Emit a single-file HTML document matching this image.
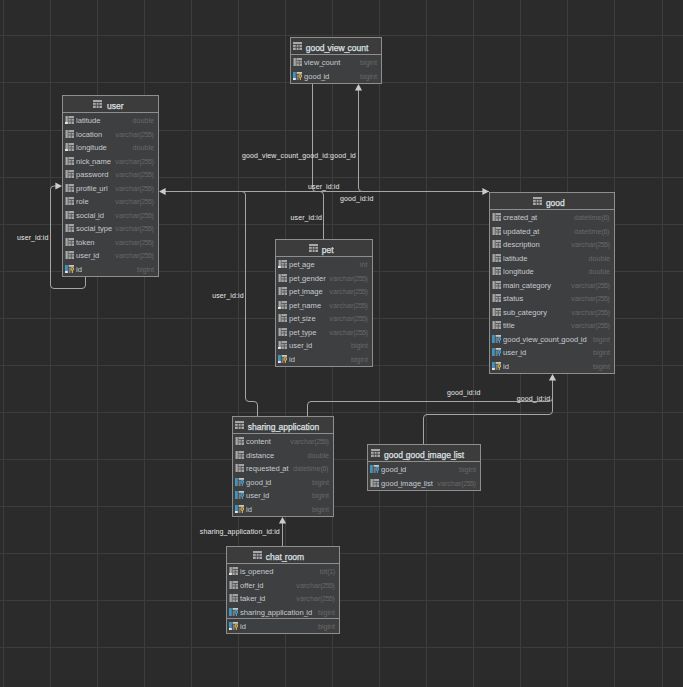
<!DOCTYPE html><html><head><meta charset="utf-8"><style>
html,body{margin:0;padding:0;width:683px;height:687px;overflow:hidden;background:#2b2b2b;}
body{position:relative;font-family:"Liberation Sans",sans-serif;}
.t{position:absolute;box-sizing:border-box;border:1px solid #8e8e8e;background:#3e3f40;}
.h{position:absolute;left:0;right:0;top:0;background:#3c3c3c;border-bottom:1px solid #8e8e8e;box-sizing:border-box;}
.s{position:absolute;white-space:nowrap;font-size:8px;line-height:10px;}
.nm{color:#c6cad0;transform:scaleX(0.95);transform-origin:0 0;}
.ty{color:#686868;transform:scaleX(0.9);transform-origin:100% 0;}
.hn{color:#dde0e4;font-size:8.5px;transform-origin:0 0;-webkit-text-stroke:0.25px #dde0e4;}
.hn i{letter-spacing:-2.2px;}
.s i{font-style:normal;letter-spacing:-1.8px;}
.s b{font-weight:normal;letter-spacing:-0.6px;}
.lb{position:absolute;white-space:nowrap;font-size:7px;line-height:8px;color:#e6e6e6;letter-spacing:0.12px;}
svg{position:absolute;left:0;top:0;}

</style></head><body>
<svg width="683" height="687" viewBox="0 0 683 687"><rect x="3" y="0" width="1" height="687" fill="#3d3d3d"/><rect x="50" y="0" width="1" height="687" fill="#3d3d3d"/><rect x="97" y="0" width="1" height="687" fill="#3d3d3d"/><rect x="144" y="0" width="1" height="687" fill="#3d3d3d"/><rect x="191" y="0" width="1" height="687" fill="#3d3d3d"/><rect x="238" y="0" width="1" height="687" fill="#3d3d3d"/><rect x="285" y="0" width="1" height="687" fill="#3d3d3d"/><rect x="332" y="0" width="1" height="687" fill="#3d3d3d"/><rect x="379" y="0" width="1" height="687" fill="#3d3d3d"/><rect x="426" y="0" width="1" height="687" fill="#3d3d3d"/><rect x="473" y="0" width="1" height="687" fill="#3d3d3d"/><rect x="520" y="0" width="1" height="687" fill="#3d3d3d"/><rect x="567" y="0" width="1" height="687" fill="#3d3d3d"/><rect x="614" y="0" width="1" height="687" fill="#3d3d3d"/><rect x="662" y="0" width="1" height="687" fill="#3d3d3d"/><rect x="0" y="35" width="683" height="1" fill="#3d3d3d"/><rect x="0" y="82" width="683" height="1" fill="#3d3d3d"/><rect x="0" y="130" width="683" height="1" fill="#3d3d3d"/><rect x="0" y="177" width="683" height="1" fill="#3d3d3d"/><rect x="0" y="224" width="683" height="1" fill="#3d3d3d"/><rect x="0" y="271" width="683" height="1" fill="#3d3d3d"/><rect x="0" y="318" width="683" height="1" fill="#3d3d3d"/><rect x="0" y="365" width="683" height="1" fill="#3d3d3d"/><rect x="0" y="412" width="683" height="1" fill="#3d3d3d"/><rect x="0" y="459" width="683" height="1" fill="#3d3d3d"/><rect x="0" y="506" width="683" height="1" fill="#3d3d3d"/><rect x="0" y="553" width="683" height="1" fill="#3d3d3d"/><rect x="0" y="600" width="683" height="1" fill="#3d3d3d"/><rect x="0" y="647" width="683" height="1" fill="#3d3d3d"/></svg>
<div class="t" style="left:62px;top:95px;width:97px;height:182px">
<div class="h" style="height:17px"></div>
</div>
<svg style="left:93.0px;top:100.00px" width="9" height="8"><rect x="0" y="0" width="9" height="8" fill="#a8a8a8"/><rect x="0" y="2" width="9" height="0.8" fill="#3c3c3c"/><rect x="0" y="4.8" width="9" height="0.8" fill="#3c3c3c"/><rect x="2.8" y="2" width="0.8" height="6" fill="#3c3c3c"/><rect x="5.6" y="2" width="0.8" height="6" fill="#3c3c3c"/></svg>
<div class="s hn" style="left:107.0px;top:100.60px">user</div>
<svg style="left:65px;top:116.25px" width="9" height="8"><rect x="0.5" y="0" width="2.3" height="8" fill="#a8a8a8"/><rect x="3.4" y="0" width="5.6" height="8" fill="#a4a4a4"/><rect x="3.4" y="2" width="5.6" height="0.8" fill="#505152"/><rect x="3.4" y="4.6" width="5.6" height="0.8" fill="#505152"/><rect x="5.8" y="2" width="0.8" height="6" fill="#505152"/><rect x="0" y="6" width="2.8" height="2" fill="#e4e4e4"/></svg>
<div class="s nm" style="left:75.5px;top:116.05px">latitude</div>
<div class="s ty" style="right:529.3px;top:116.05px">double</div>
<svg style="left:65px;top:129.75px" width="9" height="8"><rect x="0.5" y="0" width="2.3" height="8" fill="#a8a8a8"/><rect x="3.4" y="0" width="5.6" height="8" fill="#a4a4a4"/><rect x="3.4" y="2" width="5.6" height="0.8" fill="#505152"/><rect x="3.4" y="4.6" width="5.6" height="0.8" fill="#505152"/><rect x="5.8" y="2" width="0.8" height="6" fill="#505152"/></svg>
<div class="s nm" style="left:75.5px;top:129.55px">location</div>
<div class="s ty" style="right:529.3px;top:129.55px">varchar<b>(255</b>)</div>
<svg style="left:65px;top:143.25px" width="9" height="8"><rect x="0.5" y="0" width="2.3" height="8" fill="#a8a8a8"/><rect x="3.4" y="0" width="5.6" height="8" fill="#a4a4a4"/><rect x="3.4" y="2" width="5.6" height="0.8" fill="#505152"/><rect x="3.4" y="4.6" width="5.6" height="0.8" fill="#505152"/><rect x="5.8" y="2" width="0.8" height="6" fill="#505152"/><rect x="0" y="6" width="2.8" height="2" fill="#e4e4e4"/></svg>
<div class="s nm" style="left:75.5px;top:143.05px">longitude</div>
<div class="s ty" style="right:529.3px;top:143.05px">double</div>
<svg style="left:65px;top:156.75px" width="9" height="8"><rect x="0.5" y="0" width="2.3" height="8" fill="#a8a8a8"/><rect x="3.4" y="0" width="5.6" height="8" fill="#a4a4a4"/><rect x="3.4" y="2" width="5.6" height="0.8" fill="#505152"/><rect x="3.4" y="4.6" width="5.6" height="0.8" fill="#505152"/><rect x="5.8" y="2" width="0.8" height="6" fill="#505152"/></svg>
<div class="s nm" style="left:75.5px;top:156.55px">nick<i>_</i>name</div>
<div class="s ty" style="right:529.3px;top:156.55px">varchar<b>(255</b>)</div>
<svg style="left:65px;top:170.25px" width="9" height="8"><rect x="0.5" y="0" width="2.3" height="8" fill="#a8a8a8"/><rect x="3.4" y="0" width="5.6" height="8" fill="#a4a4a4"/><rect x="3.4" y="2" width="5.6" height="0.8" fill="#505152"/><rect x="3.4" y="4.6" width="5.6" height="0.8" fill="#505152"/><rect x="5.8" y="2" width="0.8" height="6" fill="#505152"/></svg>
<div class="s nm" style="left:75.5px;top:170.05px">password</div>
<div class="s ty" style="right:529.3px;top:170.05px">varchar<b>(255</b>)</div>
<svg style="left:65px;top:183.75px" width="9" height="8"><rect x="0.5" y="0" width="2.3" height="8" fill="#a8a8a8"/><rect x="3.4" y="0" width="5.6" height="8" fill="#a4a4a4"/><rect x="3.4" y="2" width="5.6" height="0.8" fill="#505152"/><rect x="3.4" y="4.6" width="5.6" height="0.8" fill="#505152"/><rect x="5.8" y="2" width="0.8" height="6" fill="#505152"/></svg>
<div class="s nm" style="left:75.5px;top:183.55px">profile<i>_</i>url</div>
<div class="s ty" style="right:529.3px;top:183.55px">varchar<b>(255</b>)</div>
<svg style="left:65px;top:197.25px" width="9" height="8"><rect x="0.5" y="0" width="2.3" height="8" fill="#a8a8a8"/><rect x="3.4" y="0" width="5.6" height="8" fill="#a4a4a4"/><rect x="3.4" y="2" width="5.6" height="0.8" fill="#505152"/><rect x="3.4" y="4.6" width="5.6" height="0.8" fill="#505152"/><rect x="5.8" y="2" width="0.8" height="6" fill="#505152"/></svg>
<div class="s nm" style="left:75.5px;top:197.05px">role</div>
<div class="s ty" style="right:529.3px;top:197.05px">varchar<b>(255</b>)</div>
<svg style="left:65px;top:210.75px" width="9" height="8"><rect x="0.5" y="0" width="2.3" height="8" fill="#a8a8a8"/><rect x="3.4" y="0" width="5.6" height="8" fill="#a4a4a4"/><rect x="3.4" y="2" width="5.6" height="0.8" fill="#505152"/><rect x="3.4" y="4.6" width="5.6" height="0.8" fill="#505152"/><rect x="5.8" y="2" width="0.8" height="6" fill="#505152"/></svg>
<div class="s nm" style="left:75.5px;top:210.55px">social<i>_</i>id</div>
<div class="s ty" style="right:529.3px;top:210.55px">varchar<b>(255</b>)</div>
<svg style="left:65px;top:224.25px" width="9" height="8"><rect x="0.5" y="0" width="2.3" height="8" fill="#a8a8a8"/><rect x="3.4" y="0" width="5.6" height="8" fill="#a4a4a4"/><rect x="3.4" y="2" width="5.6" height="0.8" fill="#505152"/><rect x="3.4" y="4.6" width="5.6" height="0.8" fill="#505152"/><rect x="5.8" y="2" width="0.8" height="6" fill="#505152"/></svg>
<div class="s nm" style="left:75.5px;top:224.05px">social<i>_</i>type</div>
<div class="s ty" style="right:529.3px;top:224.05px">varchar<b>(255</b>)</div>
<svg style="left:65px;top:237.75px" width="9" height="8"><rect x="0.5" y="0" width="2.3" height="8" fill="#a8a8a8"/><rect x="3.4" y="0" width="5.6" height="8" fill="#a4a4a4"/><rect x="3.4" y="2" width="5.6" height="0.8" fill="#505152"/><rect x="3.4" y="4.6" width="5.6" height="0.8" fill="#505152"/><rect x="5.8" y="2" width="0.8" height="6" fill="#505152"/></svg>
<div class="s nm" style="left:75.5px;top:237.55px">token</div>
<div class="s ty" style="right:529.3px;top:237.55px">varchar<b>(255</b>)</div>
<svg style="left:65px;top:251.25px" width="9" height="8"><rect x="0.5" y="0" width="2.3" height="8" fill="#a8a8a8"/><rect x="3.4" y="0" width="5.6" height="8" fill="#a4a4a4"/><rect x="3.4" y="2" width="5.6" height="0.8" fill="#505152"/><rect x="3.4" y="4.6" width="5.6" height="0.8" fill="#505152"/><rect x="5.8" y="2" width="0.8" height="6" fill="#505152"/></svg>
<div class="s nm" style="left:75.5px;top:251.05px">user<i>_</i>id</div>
<div class="s ty" style="right:529.3px;top:251.05px">varchar<b>(255</b>)</div>
<svg style="left:65px;top:264.75px" width="9" height="8"><rect x="0" y="0" width="2.8" height="8" fill="#3f95bd"/><rect x="3.6" y="0" width="5.4" height="1.8" fill="#c8c8c8"/><rect x="3.6" y="2.4" width="2" height="5.6" fill="#7c7c7c"/><circle cx="7.3" cy="3.9" r="1.3" fill="none" stroke="#dcb24a" stroke-width="1.1"/><rect x="6.8" y="5" width="1.1" height="3" fill="#dcb24a"/><rect x="0" y="6" width="2.8" height="2" fill="#e4e4e4"/></svg>
<div class="s nm" style="left:75.5px;top:264.55px">id</div>
<div class="s ty" style="right:529.3px;top:264.55px">bigint</div>
<div class="t" style="left:290px;top:37px;width:92px;height:47px">
<div class="h" style="height:17px"></div>
</div>
<svg style="left:293.2px;top:42.00px" width="9" height="8"><rect x="0" y="0" width="9" height="8" fill="#a8a8a8"/><rect x="0" y="2" width="9" height="0.8" fill="#3c3c3c"/><rect x="0" y="4.8" width="9" height="0.8" fill="#3c3c3c"/><rect x="2.8" y="2" width="0.8" height="6" fill="#3c3c3c"/><rect x="5.6" y="2" width="0.8" height="6" fill="#3c3c3c"/></svg>
<div class="s hn" style="left:305.7px;top:42.60px">good<i>_</i>view<i>_</i>count</div>
<svg style="left:293px;top:58.25px" width="9" height="8"><rect x="0.5" y="0" width="2.3" height="8" fill="#a8a8a8"/><rect x="3.4" y="0" width="5.6" height="8" fill="#a4a4a4"/><rect x="3.4" y="2" width="5.6" height="0.8" fill="#505152"/><rect x="3.4" y="4.6" width="5.6" height="0.8" fill="#505152"/><rect x="5.8" y="2" width="0.8" height="6" fill="#505152"/></svg>
<div class="s nm" style="left:303.5px;top:58.05px">view<i>_</i>count</div>
<div class="s ty" style="right:306.3px;top:58.05px">bigint</div>
<svg style="left:293px;top:71.75px" width="9" height="8"><rect x="0" y="0" width="2.8" height="8" fill="#3f95bd"/><rect x="3.6" y="0" width="5.4" height="1.8" fill="#c8c8c8"/><rect x="3.6" y="2.4" width="2" height="5.6" fill="#7c7c7c"/><circle cx="7.3" cy="3.9" r="1.3" fill="none" stroke="#dcb24a" stroke-width="1.1"/><rect x="6.8" y="5" width="1.1" height="3" fill="#dcb24a"/><rect x="0" y="6" width="2.8" height="2" fill="#e4e4e4"/></svg>
<div class="s nm" style="left:303.5px;top:71.55px">good<i>_</i>id</div>
<div class="s ty" style="right:306.3px;top:71.55px">bigint</div>
<div class="t" style="left:489px;top:192px;width:126px;height:182px">
<div class="h" style="height:17px"></div>
</div>
<svg style="left:533.2px;top:197.00px" width="9" height="8"><rect x="0" y="0" width="9" height="8" fill="#a8a8a8"/><rect x="0" y="2" width="9" height="0.8" fill="#3c3c3c"/><rect x="0" y="4.8" width="9" height="0.8" fill="#3c3c3c"/><rect x="2.8" y="2" width="0.8" height="6" fill="#3c3c3c"/><rect x="5.6" y="2" width="0.8" height="6" fill="#3c3c3c"/></svg>
<div class="s hn" style="left:545.9px;top:197.60px">good</div>
<svg style="left:492px;top:213.25px" width="9" height="8"><rect x="0.5" y="0" width="2.3" height="8" fill="#a8a8a8"/><rect x="3.4" y="0" width="5.6" height="8" fill="#a4a4a4"/><rect x="3.4" y="2" width="5.6" height="0.8" fill="#505152"/><rect x="3.4" y="4.6" width="5.6" height="0.8" fill="#505152"/><rect x="5.8" y="2" width="0.8" height="6" fill="#505152"/></svg>
<div class="s nm" style="left:502.5px;top:213.05px">created<i>_</i>at</div>
<div class="s ty" style="right:73.29999999999995px;top:213.05px">datetime<b>(6</b>)</div>
<svg style="left:492px;top:226.75px" width="9" height="8"><rect x="0.5" y="0" width="2.3" height="8" fill="#a8a8a8"/><rect x="3.4" y="0" width="5.6" height="8" fill="#a4a4a4"/><rect x="3.4" y="2" width="5.6" height="0.8" fill="#505152"/><rect x="3.4" y="4.6" width="5.6" height="0.8" fill="#505152"/><rect x="5.8" y="2" width="0.8" height="6" fill="#505152"/></svg>
<div class="s nm" style="left:502.5px;top:226.55px">updated<i>_</i>at</div>
<div class="s ty" style="right:73.29999999999995px;top:226.55px">datetime<b>(6</b>)</div>
<svg style="left:492px;top:240.25px" width="9" height="8"><rect x="0.5" y="0" width="2.3" height="8" fill="#a8a8a8"/><rect x="3.4" y="0" width="5.6" height="8" fill="#a4a4a4"/><rect x="3.4" y="2" width="5.6" height="0.8" fill="#505152"/><rect x="3.4" y="4.6" width="5.6" height="0.8" fill="#505152"/><rect x="5.8" y="2" width="0.8" height="6" fill="#505152"/></svg>
<div class="s nm" style="left:502.5px;top:240.05px">description</div>
<div class="s ty" style="right:73.29999999999995px;top:240.05px">varchar<b>(255</b>)</div>
<svg style="left:492px;top:253.75px" width="9" height="8"><rect x="0.5" y="0" width="2.3" height="8" fill="#a8a8a8"/><rect x="3.4" y="0" width="5.6" height="8" fill="#a4a4a4"/><rect x="3.4" y="2" width="5.6" height="0.8" fill="#505152"/><rect x="3.4" y="4.6" width="5.6" height="0.8" fill="#505152"/><rect x="5.8" y="2" width="0.8" height="6" fill="#505152"/></svg>
<div class="s nm" style="left:502.5px;top:253.55px">latitude</div>
<div class="s ty" style="right:73.29999999999995px;top:253.55px">double</div>
<svg style="left:492px;top:267.25px" width="9" height="8"><rect x="0.5" y="0" width="2.3" height="8" fill="#a8a8a8"/><rect x="3.4" y="0" width="5.6" height="8" fill="#a4a4a4"/><rect x="3.4" y="2" width="5.6" height="0.8" fill="#505152"/><rect x="3.4" y="4.6" width="5.6" height="0.8" fill="#505152"/><rect x="5.8" y="2" width="0.8" height="6" fill="#505152"/></svg>
<div class="s nm" style="left:502.5px;top:267.05px">longitude</div>
<div class="s ty" style="right:73.29999999999995px;top:267.05px">double</div>
<svg style="left:492px;top:280.75px" width="9" height="8"><rect x="0.5" y="0" width="2.3" height="8" fill="#a8a8a8"/><rect x="3.4" y="0" width="5.6" height="8" fill="#a4a4a4"/><rect x="3.4" y="2" width="5.6" height="0.8" fill="#505152"/><rect x="3.4" y="4.6" width="5.6" height="0.8" fill="#505152"/><rect x="5.8" y="2" width="0.8" height="6" fill="#505152"/></svg>
<div class="s nm" style="left:502.5px;top:280.55px">main<i>_</i>category</div>
<div class="s ty" style="right:73.29999999999995px;top:280.55px">varchar<b>(255</b>)</div>
<svg style="left:492px;top:294.25px" width="9" height="8"><rect x="0.5" y="0" width="2.3" height="8" fill="#a8a8a8"/><rect x="3.4" y="0" width="5.6" height="8" fill="#a4a4a4"/><rect x="3.4" y="2" width="5.6" height="0.8" fill="#505152"/><rect x="3.4" y="4.6" width="5.6" height="0.8" fill="#505152"/><rect x="5.8" y="2" width="0.8" height="6" fill="#505152"/></svg>
<div class="s nm" style="left:502.5px;top:294.05px">status</div>
<div class="s ty" style="right:73.29999999999995px;top:294.05px">varchar<b>(255</b>)</div>
<svg style="left:492px;top:307.75px" width="9" height="8"><rect x="0.5" y="0" width="2.3" height="8" fill="#a8a8a8"/><rect x="3.4" y="0" width="5.6" height="8" fill="#a4a4a4"/><rect x="3.4" y="2" width="5.6" height="0.8" fill="#505152"/><rect x="3.4" y="4.6" width="5.6" height="0.8" fill="#505152"/><rect x="5.8" y="2" width="0.8" height="6" fill="#505152"/></svg>
<div class="s nm" style="left:502.5px;top:307.55px">sub<i>_</i>category</div>
<div class="s ty" style="right:73.29999999999995px;top:307.55px">varchar<b>(255</b>)</div>
<svg style="left:492px;top:321.25px" width="9" height="8"><rect x="0.5" y="0" width="2.3" height="8" fill="#a8a8a8"/><rect x="3.4" y="0" width="5.6" height="8" fill="#a4a4a4"/><rect x="3.4" y="2" width="5.6" height="0.8" fill="#505152"/><rect x="3.4" y="4.6" width="5.6" height="0.8" fill="#505152"/><rect x="5.8" y="2" width="0.8" height="6" fill="#505152"/></svg>
<div class="s nm" style="left:502.5px;top:321.05px">title</div>
<div class="s ty" style="right:73.29999999999995px;top:321.05px">varchar<b>(255</b>)</div>
<svg style="left:492px;top:334.75px" width="9" height="8"><rect x="0" y="0" width="2.8" height="8" fill="#3f95bd"/><rect x="3.6" y="0" width="5.4" height="1.8" fill="#c8c8c8"/><rect x="3.6" y="2.4" width="2" height="5.6" fill="#7c7c7c"/><circle cx="7.3" cy="3.9" r="1.3" fill="none" stroke="#45a6d8" stroke-width="1.1"/><rect x="6.8" y="5" width="1.1" height="3" fill="#45a6d8"/></svg>
<div class="s nm" style="left:502.5px;top:334.55px">good<i>_</i>view<i>_</i>count<i>_</i>good<i>_</i>id</div>
<div class="s ty" style="right:73.29999999999995px;top:334.55px">bigint</div>
<svg style="left:492px;top:348.25px" width="9" height="8"><rect x="0" y="0" width="2.8" height="8" fill="#3f95bd"/><rect x="3.6" y="0" width="5.4" height="1.8" fill="#c8c8c8"/><rect x="3.6" y="2.4" width="2" height="5.6" fill="#7c7c7c"/><circle cx="7.3" cy="3.9" r="1.3" fill="none" stroke="#45a6d8" stroke-width="1.1"/><rect x="6.8" y="5" width="1.1" height="3" fill="#45a6d8"/></svg>
<div class="s nm" style="left:502.5px;top:348.05px">user<i>_</i>id</div>
<div class="s ty" style="right:73.29999999999995px;top:348.05px">bigint</div>
<svg style="left:492px;top:361.75px" width="9" height="8"><rect x="0" y="0" width="2.8" height="8" fill="#3f95bd"/><rect x="3.6" y="0" width="5.4" height="1.8" fill="#c8c8c8"/><rect x="3.6" y="2.4" width="2" height="5.6" fill="#7c7c7c"/><circle cx="7.3" cy="3.9" r="1.3" fill="none" stroke="#dcb24a" stroke-width="1.1"/><rect x="6.8" y="5" width="1.1" height="3" fill="#dcb24a"/><rect x="0" y="6" width="2.8" height="2" fill="#e4e4e4"/></svg>
<div class="s nm" style="left:502.5px;top:361.55px">id</div>
<div class="s ty" style="right:73.29999999999995px;top:361.55px">bigint</div>
<div class="t" style="left:275px;top:239px;width:98px;height:128px">
<div class="h" style="height:17px"></div>
</div>
<svg style="left:309.2px;top:244.00px" width="9" height="8"><rect x="0" y="0" width="9" height="8" fill="#a8a8a8"/><rect x="0" y="2" width="9" height="0.8" fill="#3c3c3c"/><rect x="0" y="4.8" width="9" height="0.8" fill="#3c3c3c"/><rect x="2.8" y="2" width="0.8" height="6" fill="#3c3c3c"/><rect x="5.6" y="2" width="0.8" height="6" fill="#3c3c3c"/></svg>
<div class="s hn" style="left:321.7px;top:244.60px">pet</div>
<svg style="left:278px;top:260.25px" width="9" height="8"><rect x="0.5" y="0" width="2.3" height="8" fill="#a8a8a8"/><rect x="3.4" y="0" width="5.6" height="8" fill="#a4a4a4"/><rect x="3.4" y="2" width="5.6" height="0.8" fill="#505152"/><rect x="3.4" y="4.6" width="5.6" height="0.8" fill="#505152"/><rect x="5.8" y="2" width="0.8" height="6" fill="#505152"/><rect x="0" y="6" width="2.8" height="2" fill="#e4e4e4"/></svg>
<div class="s nm" style="left:288.5px;top:260.05px">pet<i>_</i>age</div>
<div class="s ty" style="right:315.3px;top:260.05px">int</div>
<svg style="left:278px;top:273.75px" width="9" height="8"><rect x="0.5" y="0" width="2.3" height="8" fill="#a8a8a8"/><rect x="3.4" y="0" width="5.6" height="8" fill="#a4a4a4"/><rect x="3.4" y="2" width="5.6" height="0.8" fill="#505152"/><rect x="3.4" y="4.6" width="5.6" height="0.8" fill="#505152"/><rect x="5.8" y="2" width="0.8" height="6" fill="#505152"/></svg>
<div class="s nm" style="left:288.5px;top:273.55px">pet<i>_</i>gender</div>
<div class="s ty" style="right:315.3px;top:273.55px">varchar<b>(255</b>)</div>
<svg style="left:278px;top:287.25px" width="9" height="8"><rect x="0.5" y="0" width="2.3" height="8" fill="#a8a8a8"/><rect x="3.4" y="0" width="5.6" height="8" fill="#a4a4a4"/><rect x="3.4" y="2" width="5.6" height="0.8" fill="#505152"/><rect x="3.4" y="4.6" width="5.6" height="0.8" fill="#505152"/><rect x="5.8" y="2" width="0.8" height="6" fill="#505152"/></svg>
<div class="s nm" style="left:288.5px;top:287.05px">pet<i>_</i>image</div>
<div class="s ty" style="right:315.3px;top:287.05px">varchar<b>(255</b>)</div>
<svg style="left:278px;top:300.75px" width="9" height="8"><rect x="0.5" y="0" width="2.3" height="8" fill="#a8a8a8"/><rect x="3.4" y="0" width="5.6" height="8" fill="#a4a4a4"/><rect x="3.4" y="2" width="5.6" height="0.8" fill="#505152"/><rect x="3.4" y="4.6" width="5.6" height="0.8" fill="#505152"/><rect x="5.8" y="2" width="0.8" height="6" fill="#505152"/><rect x="0" y="6" width="2.8" height="2" fill="#e4e4e4"/></svg>
<div class="s nm" style="left:288.5px;top:300.55px">pet<i>_</i>name</div>
<div class="s ty" style="right:315.3px;top:300.55px">varchar<b>(255</b>)</div>
<svg style="left:278px;top:314.25px" width="9" height="8"><rect x="0.5" y="0" width="2.3" height="8" fill="#a8a8a8"/><rect x="3.4" y="0" width="5.6" height="8" fill="#a4a4a4"/><rect x="3.4" y="2" width="5.6" height="0.8" fill="#505152"/><rect x="3.4" y="4.6" width="5.6" height="0.8" fill="#505152"/><rect x="5.8" y="2" width="0.8" height="6" fill="#505152"/></svg>
<div class="s nm" style="left:288.5px;top:314.05px">pet<i>_</i>size</div>
<div class="s ty" style="right:315.3px;top:314.05px">varchar<b>(255</b>)</div>
<svg style="left:278px;top:327.75px" width="9" height="8"><rect x="0.5" y="0" width="2.3" height="8" fill="#a8a8a8"/><rect x="3.4" y="0" width="5.6" height="8" fill="#a4a4a4"/><rect x="3.4" y="2" width="5.6" height="0.8" fill="#505152"/><rect x="3.4" y="4.6" width="5.6" height="0.8" fill="#505152"/><rect x="5.8" y="2" width="0.8" height="6" fill="#505152"/></svg>
<div class="s nm" style="left:288.5px;top:327.55px">pet<i>_</i>type</div>
<div class="s ty" style="right:315.3px;top:327.55px">varchar<b>(255</b>)</div>
<svg style="left:278px;top:341.25px" width="9" height="8"><rect x="0.5" y="0" width="2.3" height="8" fill="#a8a8a8"/><rect x="3.4" y="0" width="5.6" height="8" fill="#a4a4a4"/><rect x="3.4" y="2" width="5.6" height="0.8" fill="#505152"/><rect x="3.4" y="4.6" width="5.6" height="0.8" fill="#505152"/><rect x="5.8" y="2" width="0.8" height="6" fill="#505152"/><rect x="0" y="6" width="2.8" height="2" fill="#e4e4e4"/></svg>
<div class="s nm" style="left:288.5px;top:341.05px">user<i>_</i>id</div>
<div class="s ty" style="right:315.3px;top:341.05px">bigint</div>
<svg style="left:278px;top:354.75px" width="9" height="8"><rect x="0" y="0" width="2.8" height="8" fill="#3f95bd"/><rect x="3.6" y="0" width="5.4" height="1.8" fill="#c8c8c8"/><rect x="3.6" y="2.4" width="2" height="5.6" fill="#7c7c7c"/><circle cx="7.3" cy="3.9" r="1.3" fill="none" stroke="#dcb24a" stroke-width="1.1"/><rect x="6.8" y="5" width="1.1" height="3" fill="#dcb24a"/><rect x="0" y="6" width="2.8" height="2" fill="#e4e4e4"/></svg>
<div class="s nm" style="left:288.5px;top:354.55px">id</div>
<div class="s ty" style="right:315.3px;top:354.55px">bigint</div>
<div class="t" style="left:232px;top:416px;width:102px;height:101px">
<div class="h" style="height:17px"></div>
</div>
<svg style="left:235.1px;top:421.00px" width="9" height="8"><rect x="0" y="0" width="9" height="8" fill="#a8a8a8"/><rect x="0" y="2" width="9" height="0.8" fill="#3c3c3c"/><rect x="0" y="4.8" width="9" height="0.8" fill="#3c3c3c"/><rect x="2.8" y="2" width="0.8" height="6" fill="#3c3c3c"/><rect x="5.6" y="2" width="0.8" height="6" fill="#3c3c3c"/></svg>
<div class="s hn" style="left:247.7px;top:421.60px">sharing<i>_</i>application</div>
<svg style="left:235px;top:437.25px" width="9" height="8"><rect x="0.5" y="0" width="2.3" height="8" fill="#a8a8a8"/><rect x="3.4" y="0" width="5.6" height="8" fill="#a4a4a4"/><rect x="3.4" y="2" width="5.6" height="0.8" fill="#505152"/><rect x="3.4" y="4.6" width="5.6" height="0.8" fill="#505152"/><rect x="5.8" y="2" width="0.8" height="6" fill="#505152"/></svg>
<div class="s nm" style="left:245.5px;top:437.05px">content</div>
<div class="s ty" style="right:354.3px;top:437.05px">varchar<b>(255</b>)</div>
<svg style="left:235px;top:450.75px" width="9" height="8"><rect x="0.5" y="0" width="2.3" height="8" fill="#a8a8a8"/><rect x="3.4" y="0" width="5.6" height="8" fill="#a4a4a4"/><rect x="3.4" y="2" width="5.6" height="0.8" fill="#505152"/><rect x="3.4" y="4.6" width="5.6" height="0.8" fill="#505152"/><rect x="5.8" y="2" width="0.8" height="6" fill="#505152"/></svg>
<div class="s nm" style="left:245.5px;top:450.55px">distance</div>
<div class="s ty" style="right:354.3px;top:450.55px">double</div>
<svg style="left:235px;top:464.25px" width="9" height="8"><rect x="0.5" y="0" width="2.3" height="8" fill="#a8a8a8"/><rect x="3.4" y="0" width="5.6" height="8" fill="#a4a4a4"/><rect x="3.4" y="2" width="5.6" height="0.8" fill="#505152"/><rect x="3.4" y="4.6" width="5.6" height="0.8" fill="#505152"/><rect x="5.8" y="2" width="0.8" height="6" fill="#505152"/></svg>
<div class="s nm" style="left:245.5px;top:464.05px">requested<i>_</i>at</div>
<div class="s ty" style="right:354.3px;top:464.05px">datetime<b>(6</b>)</div>
<svg style="left:235px;top:477.75px" width="9" height="8"><rect x="0" y="0" width="2.8" height="8" fill="#3f95bd"/><rect x="3.6" y="0" width="5.4" height="1.8" fill="#c8c8c8"/><rect x="3.6" y="2.4" width="2" height="5.6" fill="#7c7c7c"/><circle cx="7.3" cy="3.9" r="1.3" fill="none" stroke="#45a6d8" stroke-width="1.1"/><rect x="6.8" y="5" width="1.1" height="3" fill="#45a6d8"/></svg>
<div class="s nm" style="left:245.5px;top:477.55px">good<i>_</i>id</div>
<div class="s ty" style="right:354.3px;top:477.55px">bigint</div>
<svg style="left:235px;top:491.25px" width="9" height="8"><rect x="0" y="0" width="2.8" height="8" fill="#3f95bd"/><rect x="3.6" y="0" width="5.4" height="1.8" fill="#c8c8c8"/><rect x="3.6" y="2.4" width="2" height="5.6" fill="#7c7c7c"/><circle cx="7.3" cy="3.9" r="1.3" fill="none" stroke="#45a6d8" stroke-width="1.1"/><rect x="6.8" y="5" width="1.1" height="3" fill="#45a6d8"/></svg>
<div class="s nm" style="left:245.5px;top:491.05px">user<i>_</i>id</div>
<div class="s ty" style="right:354.3px;top:491.05px">bigint</div>
<svg style="left:235px;top:504.75px" width="9" height="8"><rect x="0" y="0" width="2.8" height="8" fill="#3f95bd"/><rect x="3.6" y="0" width="5.4" height="1.8" fill="#c8c8c8"/><rect x="3.6" y="2.4" width="2" height="5.6" fill="#7c7c7c"/><circle cx="7.3" cy="3.9" r="1.3" fill="none" stroke="#dcb24a" stroke-width="1.1"/><rect x="6.8" y="5" width="1.1" height="3" fill="#dcb24a"/><rect x="0" y="6" width="2.8" height="2" fill="#e4e4e4"/></svg>
<div class="s nm" style="left:245.5px;top:504.55px">id</div>
<div class="s ty" style="right:354.3px;top:504.55px">bigint</div>
<div class="t" style="left:367px;top:444px;width:114px;height:47px">
<div class="h" style="height:17px"></div>
</div>
<svg style="left:370.8px;top:449.00px" width="9" height="8"><rect x="0" y="0" width="9" height="8" fill="#a8a8a8"/><rect x="0" y="2" width="9" height="0.8" fill="#3c3c3c"/><rect x="0" y="4.8" width="9" height="0.8" fill="#3c3c3c"/><rect x="2.8" y="2" width="0.8" height="6" fill="#3c3c3c"/><rect x="5.6" y="2" width="0.8" height="6" fill="#3c3c3c"/></svg>
<div class="s hn" style="left:384.0px;top:449.60px">good<i>_</i>good<i>_</i>image<i>_</i>list</div>
<svg style="left:370px;top:465.25px" width="9" height="8"><rect x="0" y="0" width="2.8" height="8" fill="#3f95bd"/><rect x="3.6" y="0" width="5.4" height="1.8" fill="#c8c8c8"/><rect x="3.6" y="2.4" width="2" height="5.6" fill="#7c7c7c"/><circle cx="7.3" cy="3.9" r="1.3" fill="none" stroke="#45a6d8" stroke-width="1.1"/><rect x="6.8" y="5" width="1.1" height="3" fill="#45a6d8"/></svg>
<div class="s nm" style="left:380.5px;top:465.05px">good<i>_</i>id</div>
<div class="s ty" style="right:207.3px;top:465.05px">bigint</div>
<svg style="left:370px;top:478.75px" width="9" height="8"><rect x="0.5" y="0" width="2.3" height="8" fill="#a8a8a8"/><rect x="3.4" y="0" width="5.6" height="8" fill="#a4a4a4"/><rect x="3.4" y="2" width="5.6" height="0.8" fill="#505152"/><rect x="3.4" y="4.6" width="5.6" height="0.8" fill="#505152"/><rect x="5.8" y="2" width="0.8" height="6" fill="#505152"/></svg>
<div class="s nm" style="left:380.5px;top:478.55px">good<i>_</i>image<i>_</i>list</div>
<div class="s ty" style="right:207.3px;top:478.55px">varchar<b>(255</b>)</div>
<div class="t" style="left:226px;top:546px;width:114px;height:88px">
<div class="h" style="height:17px"></div>
</div>
<svg style="left:253.2px;top:551.00px" width="9" height="8"><rect x="0" y="0" width="9" height="8" fill="#a8a8a8"/><rect x="0" y="2" width="9" height="0.8" fill="#3c3c3c"/><rect x="0" y="4.8" width="9" height="0.8" fill="#3c3c3c"/><rect x="2.8" y="2" width="0.8" height="6" fill="#3c3c3c"/><rect x="5.6" y="2" width="0.8" height="6" fill="#3c3c3c"/></svg>
<div class="s hn" style="left:265.8px;top:551.60px">chat<i>_</i>room</div>
<svg style="left:229px;top:567.25px" width="9" height="8"><rect x="0.5" y="0" width="2.3" height="8" fill="#a8a8a8"/><rect x="3.4" y="0" width="5.6" height="8" fill="#a4a4a4"/><rect x="3.4" y="2" width="5.6" height="0.8" fill="#505152"/><rect x="3.4" y="4.6" width="5.6" height="0.8" fill="#505152"/><rect x="5.8" y="2" width="0.8" height="6" fill="#505152"/><rect x="0" y="6" width="2.8" height="2" fill="#e4e4e4"/></svg>
<div class="s nm" style="left:239.5px;top:567.05px">is<i>_</i>opened</div>
<div class="s ty" style="right:348.3px;top:567.05px">bit<b>(1</b>)</div>
<svg style="left:229px;top:580.75px" width="9" height="8"><rect x="0.5" y="0" width="2.3" height="8" fill="#a8a8a8"/><rect x="3.4" y="0" width="5.6" height="8" fill="#a4a4a4"/><rect x="3.4" y="2" width="5.6" height="0.8" fill="#505152"/><rect x="3.4" y="4.6" width="5.6" height="0.8" fill="#505152"/><rect x="5.8" y="2" width="0.8" height="6" fill="#505152"/></svg>
<div class="s nm" style="left:239.5px;top:580.55px">offer<i>_</i>id</div>
<div class="s ty" style="right:348.3px;top:580.55px">varchar<b>(255</b>)</div>
<svg style="left:229px;top:594.25px" width="9" height="8"><rect x="0.5" y="0" width="2.3" height="8" fill="#a8a8a8"/><rect x="3.4" y="0" width="5.6" height="8" fill="#a4a4a4"/><rect x="3.4" y="2" width="5.6" height="0.8" fill="#505152"/><rect x="3.4" y="4.6" width="5.6" height="0.8" fill="#505152"/><rect x="5.8" y="2" width="0.8" height="6" fill="#505152"/></svg>
<div class="s nm" style="left:239.5px;top:594.05px">taker<i>_</i>id</div>
<div class="s ty" style="right:348.3px;top:594.05px">varchar<b>(255</b>)</div>
<svg style="left:229px;top:607.75px" width="9" height="8"><rect x="0" y="0" width="2.8" height="8" fill="#3f95bd"/><rect x="3.6" y="0" width="5.4" height="1.8" fill="#c8c8c8"/><rect x="3.6" y="2.4" width="2" height="5.6" fill="#7c7c7c"/><circle cx="7.3" cy="3.9" r="1.3" fill="none" stroke="#45a6d8" stroke-width="1.1"/><rect x="6.8" y="5" width="1.1" height="3" fill="#45a6d8"/></svg>
<div class="s nm" style="left:239.5px;top:607.55px">sharing<i>_</i>application<i>_</i>id</div>
<div class="s ty" style="right:348.3px;top:607.55px">bigint</div>
<svg style="left:229px;top:622.25px" width="9" height="8"><rect x="0" y="0" width="2.8" height="8" fill="#3f95bd"/><rect x="3.6" y="0" width="5.4" height="1.8" fill="#c8c8c8"/><rect x="3.6" y="2.4" width="2" height="5.6" fill="#7c7c7c"/><circle cx="7.3" cy="3.9" r="1.3" fill="none" stroke="#dcb24a" stroke-width="1.1"/><rect x="6.8" y="5" width="1.1" height="3" fill="#dcb24a"/><rect x="0" y="6" width="2.8" height="2" fill="#e4e4e4"/></svg>
<div class="s nm" style="left:239.5px;top:622.05px">id</div>
<div class="s ty" style="right:348.3px;top:622.05px">bigint</div>
<div style="position:absolute;left:226px;width:114px;top:618.0px;height:1px;background:#8e8e8e"></div>
<svg width="683" height="687" viewBox="0 0 683 687"><path d="M489 191.5 H160" fill="none" stroke="#a6a6a6" stroke-width="1"/><polygon points="159,191.5 165.6,187.9 165.6,195.1" fill="#cccccc"/><polygon points="489,191.5 482.4,187.9 482.4,195.1" fill="#cccccc"/><path d="M323.5 239 V195.0 Q323.5 191.5 320.0 191.5" fill="none" stroke="#a6a6a6" stroke-width="1"/><path d="M257.5 416 V405.0 Q257.5 401.5 254.0 401.5 H249.0 Q245.5 401.5 245.5 398.0 V195.0 Q245.5 191.5 242.0 191.5" fill="none" stroke="#a6a6a6" stroke-width="1"/><path d="M312.5 84 V188.0 Q312.5 191.5 316.0 191.5" fill="none" stroke="#a6a6a6" stroke-width="1"/><path d="M362.0 191.5 Q358.5 191.5 358.5 188.0 V90" fill="none" stroke="#a6a6a6" stroke-width="1"/><polygon points="358.5,84 354.9,90.6 362.1,90.6" fill="#cccccc"/><path d="M85.5 277 V285.0 Q85.5 288.5 82.0 288.5 H54.0 Q50.5 288.5 50.5 285.0 V189.5 Q50.5 186 54.0 186 H56" fill="none" stroke="#a6a6a6" stroke-width="1"/><polygon points="62,186 55.4,182.4 55.4,189.6" fill="#cccccc"/><path d="M307.5 416 V405.0 Q307.5 401.5 311.0 401.5 H549.0 Q552.5 401.5 552.5 398.0 V380" fill="none" stroke="#a6a6a6" stroke-width="1"/><path d="M423.5 444 V418.0 Q423.5 414.5 427.0 414.5 H549.0 Q552.5 414.5 552.5 411.0 V380" fill="none" stroke="#a6a6a6" stroke-width="1"/><polygon points="552.5,374 548.9,380.6 556.1,380.6" fill="#cccccc"/><path d="M282.5 546 V522" fill="none" stroke="#a6a6a6" stroke-width="1"/><polygon points="282.5,517 278.9,523.6 286.1,523.6" fill="#cccccc"/></svg>
<div class="lb" style="left:17px;top:233.5px">user_id:id</div>
<div class="lb" style="left:242px;top:151.5px">good_view_count_good_id:good_id</div>
<div class="lb" style="left:308px;top:182.7px">user_id:id</div>
<div class="lb" style="left:340px;top:194.8px">good_id:id</div>
<div class="lb" style="left:290.5px;top:213.5px">user_id:id</div>
<div class="lb" style="left:212.2px;top:292.3px">user_id:id</div>
<div class="lb" style="left:446.9px;top:389.2px">good_id:id</div>
<div class="lb" style="left:516.8px;top:394.5px">good_id:id</div>
<div class="lb" style="left:199.8px;top:527.8px">sharing_application_id:id</div>
</body></html>
